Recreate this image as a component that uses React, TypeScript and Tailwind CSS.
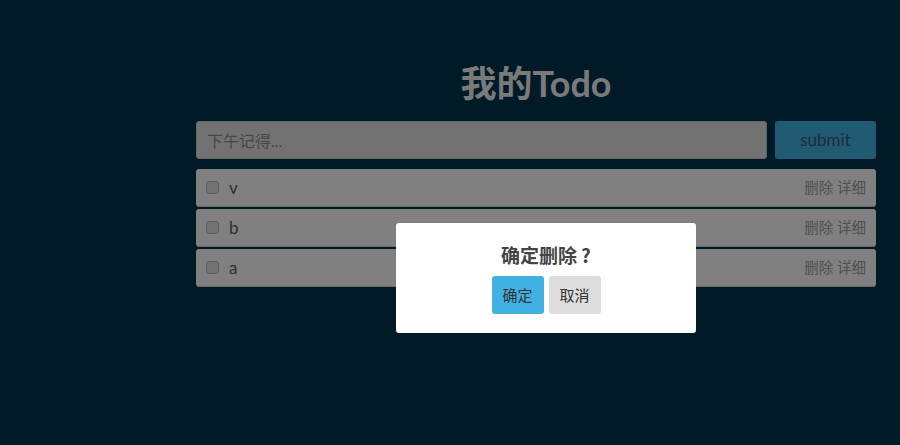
import { useState } from 'react';

type Todo = {
  id: number;
  text: string;
  done: boolean;
};

const font = { fontFamily: 'Lato, "Noto Sans CJK SC", sans-serif' };
const cjk = { fontFamily: '"Noto Sans CJK SC", Lato, sans-serif' };

export default function App() {
  const [todos, setTodos] = useState<Todo[]>([
    { id: 1, text: 'v', done: false },
    { id: 2, text: 'b', done: false },
    { id: 3, text: 'a', done: false },
  ]);
  const [value, setValue] = useState('');
  const [confirmOpen, setConfirmOpen] = useState(true);

  const toggle = (id: number) => {
    setTodos(todos.map(t => (t.id === id ? { ...t, done: !t.done } : t)));
  };

  return (
    <div className="relative min-h-[445px] bg-[#001a28]" style={font}>
      {/* Main */}
      <div className="ml-[196px] w-[680px] pt-[62px]">
        <h1 className="mb-[17px] text-center text-[36px] font-bold leading-[42px] text-[#7a7a7a]">
          我的Todo
        </h1>

        <div className="flex gap-2">
          <input
            value={value}
            onChange={e => setValue(e.target.value)}
            placeholder="下午记得..."
            className="h-[38px] flex-1 rounded-[3px] border border-[#666] bg-[#727272] px-[10px] text-[16px] text-[#333] outline-none placeholder:text-[#474747]"
          />
          <button className="h-[38px] w-[101px] rounded-[3px] bg-[#215a73] text-[17px] text-[#1a2e39]">
            submit
          </button>
        </div>

        <div className="mt-[10px] flex flex-col gap-[2px]">
          {todos.map(todo => (
            <div
              key={todo.id}
              className="flex h-[38px] items-center rounded-[3px] border-b border-[#6a6a6a] bg-[#808080] pl-[10px] pr-[10px]"
            >
              <span
                onClick={() => toggle(todo.id)}
                className="h-[13px] w-[13px] rounded-[3px] border border-[#5c5c5c] bg-[#727272]"
              />
              <span className="ml-[10px] flex-1 text-[17px] text-[#2e2e2e]">{todo.text}</span>
              <span className="text-[14.5px] text-[#4f4f4f]">
                <span onClick={() => setConfirmOpen(true)}>删除</span> 详细
              </span>
            </div>
          ))}
        </div>
      </div>

      {/* Confirm dialog */}
      {confirmOpen && (
        <div className="absolute left-[396px] top-[223px] w-[300px] rounded-[3px] bg-white pb-[19px] pt-[20px]">
          <div
            className="text-center text-[19px] font-bold leading-[24px] text-[#444] [text-spacing-trim:space-all]"
            style={cjk}
          >
            确定删除<span className="ml-[4px]">?</span>
          </div>
          <div className="mt-[9px] flex justify-center gap-[5px]">
            <button
              onClick={() => setConfirmOpen(false)}
              className="h-[38px] w-[52px] rounded-[3px] bg-[#41b0e3] text-[15px] text-[#333]"
            >
              确定
            </button>
            <button
              onClick={() => setConfirmOpen(false)}
              className="h-[38px] w-[52px] rounded-[3px] bg-[#dddddd] text-[15px] text-[#333]"
            >
              取消
            </button>
          </div>
        </div>
      )}
    </div>
  );
}
